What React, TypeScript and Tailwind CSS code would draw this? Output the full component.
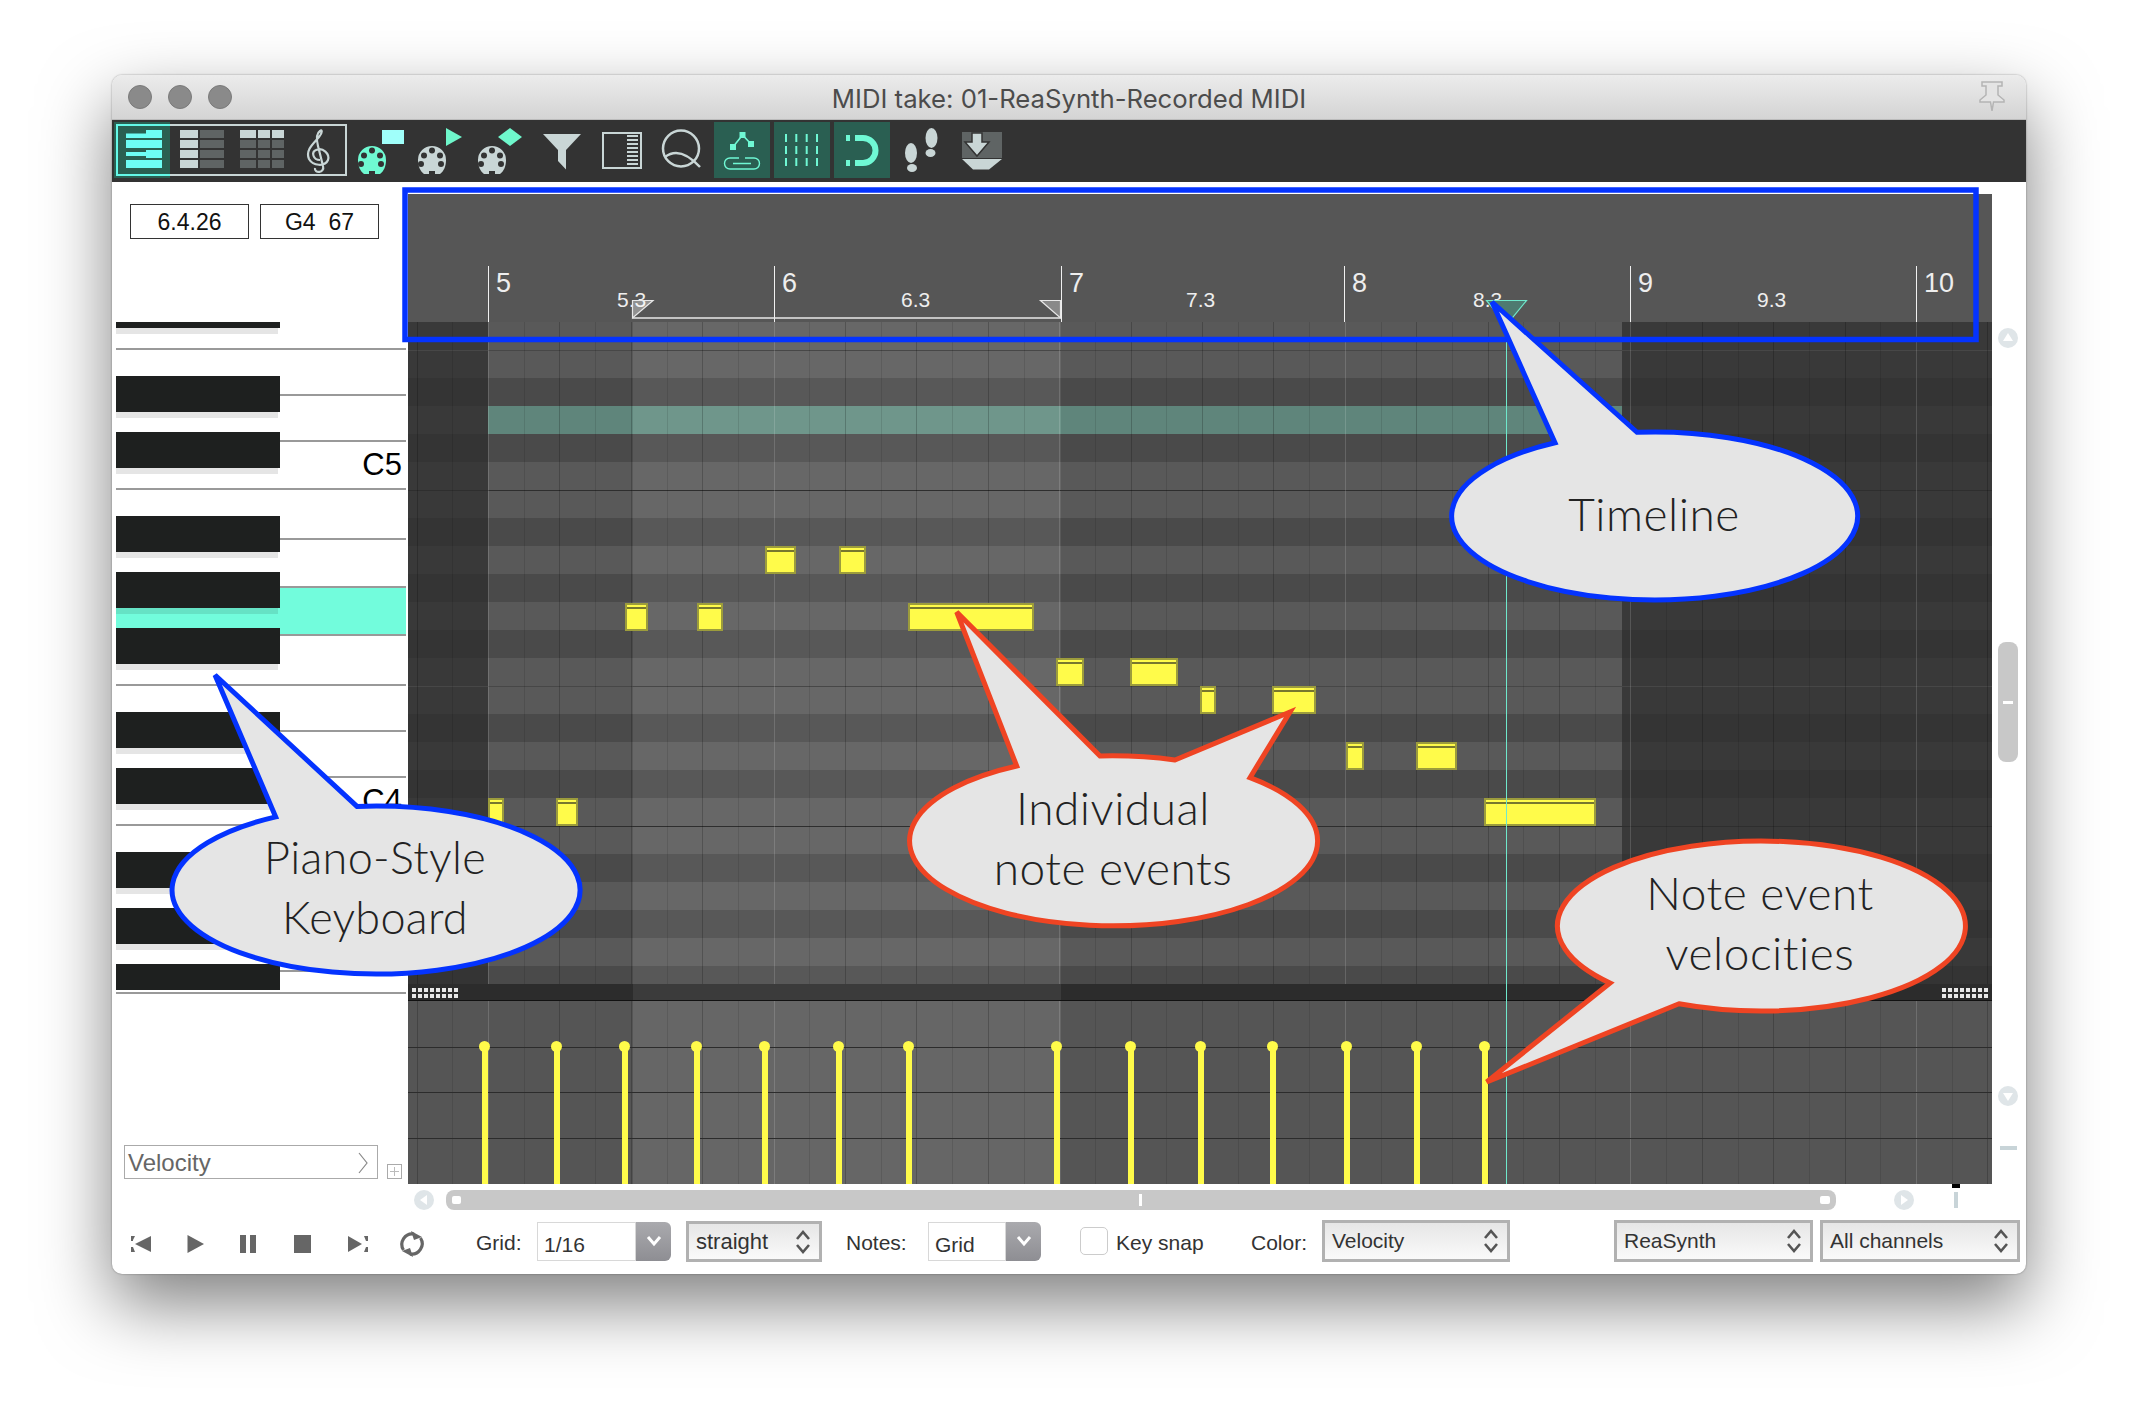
import React from "react";

const LIGHT = "#c9d6d6";
const TEAL = "#6ff8d4";
const DIM = "#5f6464";

const rowPattern = "LLDTDLLDLDLDLLDLDLLDLDLD".split("");
const rowLines: Record<number, string> = {
  1: "border-t border-[#474747]",
  6: "border-t border-[#2e2e2e]",
  13: "border-t border-[#474747]",
  18: "border-t border-[#2e2e2e]",
};
const segClasses: Record<string, string[]> = {
  L: ["bg-[#393939]", "bg-[#595959]", "bg-[#676767]", "bg-[#595959]", "bg-[#393939]"],
  D: ["bg-[#343434]", "bg-[#4a4a4a]", "bg-[#585858]", "bg-[#4a4a4a]", "bg-[#343434]"],
  T: ["bg-[#393939]", "bg-[#5f857b]", "bg-[#6f968b]", "bg-[#5f857b]", "bg-[#393939]"],
};
const segWidths = ["w-[80px]", "w-[145px]", "w-[428px]", "w-[561px]", "flex-1"];

const notes = [
  [765, 546, 31], [839, 546, 27],
  [625, 603, 23], [697, 603, 26], [908, 603, 126],
  [1056, 658, 28], [1130, 658, 48],
  [1200, 686, 16], [1272, 686, 44],
  [1346, 742, 18], [1416, 742, 41],
  [488, 798, 16], [556, 798, 22], [1484, 798, 112],
];
const stems = [485, 557, 625, 697, 765, 839, 909, 1057, 1131, 1201, 1273, 1347, 1417, 1485];
const bars = [
  { x: 80, t: "5" }, { x: 366, t: "6" }, { x: 653, t: "7" },
  { x: 936, t: "8" }, { x: 1222, t: "9" }, { x: 1508, t: "10" },
];
const subs = [
  { x: 209, t: "5.3" }, { x: 493, t: "6.3" }, { x: 778, t: "7.3" },
  { x: 1065, t: "8.3" }, { x: 1349, t: "9.3" },
];
const whiteEnds = [350, 396, 442, 490, 540, 588, 636, 686, 732, 778, 826, 874, 922, 972, 994];
const blackKeys = [
  [322, 6], [376, 36], [432, 36], [516, 36], [572, 36], [628, 36],
  [712, 36], [768, 36], [852, 36], [908, 36], [964, 26],
];

function GridLines() {
  const items = [];
  for (let i = -2; i < 43; i++) {
    const x = Math.round(80 + 35.7 * i);
    const bar = i % 8 === 0;
    items.push(
      <div
        key={i}
        className={bar ? "absolute top-0 bottom-0 w-px bg-white/15" : i % 2 === 0 ? "absolute top-0 bottom-0 w-px bg-black/20" : "absolute top-0 bottom-0 w-px bg-black/10"}
        style={{ left: x }}
      />
    );
  }
  return <>{items}</>;
}

function Handle({ className }: { className: string }) {
  return (
    <div className={"absolute top-[4px] grid grid-cols-8 gap-[2px] w-[46px] " + className}>
      {Array.from({ length: 16 }).map((_, i) => (
        <div key={i} className="w-[4px] h-[4px] bg-[#e8e8e8]" />
      ))}
    </div>
  );
}

function Din({ cx, fill }: { cx: number; fill: string }) {
  return (
    <g>
      <path
        fill={fill}
        d={`M${cx - 14},160 A14,14 0 0 1 ${cx + 14},160 C${cx + 14},166 ${cx + 12},171 ${cx + 8},174 H${cx + 3} V171 H${cx - 3} V174 H${cx - 8} C${cx - 12},171 ${cx - 14},166 ${cx - 14},160 Z`}
      />
      {[[0, 150.5], [-8, 155.5], [8, 155.5], [-11, 164], [9, 164]].map(([dx, y], i) => (
        <circle key={i} cx={cx + dx} cy={y} r={3} fill="#333333" />
      ))}
    </g>
  );
}

function Bar({ x, w, children }: { x: number; w: number; children: React.ReactNode }) {
  return (
    <svg width={w} height={62} viewBox={`${x} 120 ${w} 62`} className="shrink-0 block">
      {children}
    </svg>
  );
}

function Toolbar() {
  const rowsY = [130, 140, 150, 160];
  return (
    <div className="h-[62px] bg-[#333333] flex shrink-0">
      <Bar x={112} w={240}>
        <rect x={114} y={122} width={56} height={56} fill="#2a5f52" />
        <rect x={117} y={125} width={229} height={50} fill="none" stroke={LIGHT} strokeWidth={2} />
        <path d="M170,125 H117 V175 H170" fill="none" stroke="#64f8e8" strokeWidth={2} />
        <g fill="#6dfdf5">
          <rect x={146} y={130} width={16} height={8} />
          <rect x={126} y={133.5} width={20} height={4.5} />
          <rect x={126} y={140} width={36} height={8} />
          <rect x={146} y={150} width={16} height={8} />
          <rect x={126} y={152} width={20} height={4} />
          <rect x={126} y={160} width={36} height={8} />
        </g>
        {rowsY.map((y) => (
          <g key={y}>
            <rect x={180} y={y} width={18} height={8} fill={LIGHT} />
            <rect x={200} y={y} width={24} height={8} fill={DIM} />
            <rect x={240} y={y} width={16} height={8} fill={y === 130 ? LIGHT : DIM} />
            <rect x={258} y={y} width={12} height={8} fill={y === 130 ? LIGHT : DIM} />
            <rect x={272} y={y} width={12} height={8} fill={y === 130 ? LIGHT : DIM} />
          </g>
        ))}
        <path
          d="M320,160 C313,160 311,152 316,150 C323,147 330,154 328,160 C325,167 313,166 309,159 C305,150 314,143 319,137 C323,132 322,129 320,131 C317,133 316,138 318,146 L323,166 C325,173 314,174 315,168"
          fill="none"
          stroke={LIGHT}
          strokeWidth={2.2}
        />
      </Bar>
      <Bar x={352} w={180}>
        <Din cx={372} fill="#6ffad2" />
        <rect x={382} y={130} width={22} height={14} fill="#a0fffa" />
        <Din cx={432} fill={LIGHT} />
        <path d="M446,128 L462,137 L446,146 Z" fill="#6ff8cc" />
        <Din cx={492} fill={LIGHT} />
        <path d="M510,128 L522,137 L510,146 L498,137 Z" fill="#6ff8cc" />
      </Bar>
      <Bar x={532} w={180}>
        <path d="M543,134 H581 L566,150 V169.5 L558,161 V150 Z" fill={LIGHT} />
        <rect x={603} y={133} width={38} height={35} fill="none" stroke={LIGHT} strokeWidth={2} />
        {[136, 140, 144, 148, 152, 156, 160, 164].map((y) => (
          <rect key={y} x={627} y={y - 1} width={11} height={2} fill={LIGHT} />
        ))}
        <circle cx={681} cy={148.5} r={18} fill="none" stroke={LIGHT} strokeWidth={2.5} />
        <path d="M665,157 C674,150 686,152 700,167" fill="none" stroke={LIGHT} strokeWidth={2.5} />
      </Bar>
      <Bar x={712} w={180}>
        <rect x={714} y={122} width={56} height={56} fill="#2a5f52" />
        <rect x={774} y={122} width={56} height={56} fill="#2a5f52" />
        <rect x={834} y={122} width={56} height={56} fill="#2a5f52" />
        <g fill={TEAL}>
          <rect x={739.5} y={132} width={6} height={6} />
          <rect x={730} y={144} width={6} height={6} />
          <rect x={748} y={141} width={6} height={6} />
        </g>
        <path d="M733,147 L742.5,135 L751,144" fill="none" stroke={TEAL} strokeWidth={1.6} />
        <path d="M739,158 H730 a5.5,5.5 0 0 0 0,11 H754 a5.5,5.5 0 0 0 0,-11 H745 M733,163.5 H751" fill="none" stroke={TEAL} strokeWidth={1.4} />
        {[786, 796.3, 806.7, 817].map((x) => (
          <path key={x} d={`M${x},134 V142 M${x},146 V154 M${x},158 V166`} stroke={TEAL} strokeWidth={2} fill="none" />
        ))}
        <path d="M855,138 H863 A12.5,12.5 0 0 1 863,163 H855" fill="none" stroke={TEAL} strokeWidth={6} />
        <rect x={846} y={135} width={4} height={6} fill={TEAL} />
        <rect x={846} y={160} width={4} height={6} fill={TEAL} />
      </Bar>
      <Bar x={892} w={120}>
        <g fill={LIGHT}>
          <ellipse cx={911} cy={153} rx={6} ry={10} />
          <ellipse cx={912} cy={168} rx={5} ry={4} />
          <ellipse cx={931.5} cy={138} rx={6} ry={10} />
          <ellipse cx={930.5} cy={153} rx={5} ry={4} />
        </g>
        <path d="M962,132 H1002 V158 H962 Z" fill={DIM} />
        <path d="M962,159 H1002 L989,169.5 H973 Z" fill={LIGHT} />
        <path d="M972,133 H982 V142 H989 L977,156 L965,142 H972 Z" fill={LIGHT} stroke="#333333" strokeWidth={1.5} />
      </Bar>
    </div>
  );
}

function Updown() {
  return (
    <svg width={14} height={24} viewBox="0 0 14 24" className="shrink-0">
      <path d="M1,9 L7,2 L13,9 M1,15 L7,22 L13,15" fill="none" stroke="#555555" strokeWidth={2.6} />
    </svg>
  );
}

function Stepper({ label, className }: { label: string; className: string }) {
  return (
    <div className={"border-[3px] border-[#b1b1b1] bg-gradient-to-b from-[#e6e6e6] to-[#fafafa] flex items-center justify-between pl-[7px] pr-[9px] text-[#333333] shrink-0 " + className}>
      <span>{label}</span>
      <Updown />
    </div>
  );
}

function Combo({ label, className }: { label: string; className: string }) {
  return (
    <div className={"h-[39px] flex shrink-0 " + className}>
      <div className="flex-1 bg-white border border-[#d8d8d8] pl-[6px] pt-[9px] leading-[26px] text-[#333333]">{label}</div>
      <div className="w-[35px] bg-gradient-to-b from-[#aaaaae] to-[#8e8e93] rounded-r-[6px] flex items-center justify-center">
        <svg width={16} height={12} viewBox="0 0 16 12">
          <path d="M2,2 L8,9 L14,2" fill="none" stroke="#ffffff" strokeWidth={3} />
        </svg>
      </div>
    </div>
  );
}

function Circle({ dir }: { dir: "up" | "down" | "left" | "right" }) {
  const p = {
    up: "M10,5 L15,13 H5 Z",
    down: "M10,15 L15,7 H5 Z",
    left: "M6,10 L13,5 V15 Z",
    right: "M14,10 L7,5 V15 Z",
  }[dir];
  return (
    <svg width={20} height={20} viewBox="0 0 20 20" className="shrink-0 block">
      <circle cx={10} cy={10} r={10} fill="#dfe5e8" />
      <path d={p} fill="#ffffff" />
    </svg>
  );
}

function Keyboard() {
  let prev = 322;
  return (
    <div className="relative w-[290px] h-[672px] ml-[4px] mt-[83px]">
      {whiteEnds.map((end) => {
        const h = end - prev;
        const isG = end === 636;
        prev = end;
        return (
          <div
            key={end}
            className={"relative border-b-2 border-[#999999] " + (isG ? "bg-[#72fcdc]" : "bg-white")}
            style={{ height: h }}
          >
            {end === 490 && <span className="absolute right-[4px] bottom-[5px] text-[31px] leading-[36px] text-black">C5</span>}
            {end === 826 && <span className="absolute right-[4px] bottom-[5px] text-[31px] leading-[36px] text-black">C4</span>}
          </div>
        );
      })}
      {blackKeys.map(([y, h]) => (
        <div key={y} className="absolute left-0" style={{ top: y - 322 }}>
          <div className="w-[164px] bg-[#1e201f]" style={{ height: h }} />
          {y !== 964 && <div className="w-[162px] h-[6px] bg-black/10" />}
        </div>
      ))}
    </div>
  );
}

function Ruler() {
  return (
    <div className="relative h-[128px] bg-[#565656] text-[#eeeeee]">
      {bars.map((b) => (
        <React.Fragment key={b.t}>
          <div className="absolute top-[72px] bottom-0 w-px bg-[#f0f0f0]" style={{ left: b.x }} />
          <span className="absolute top-[76px] text-[27px] leading-[27px]" style={{ left: b.x + 8 }}>{b.t}</span>
        </React.Fragment>
      ))}
      {subs.map((s) => (
        <span key={s.t} className="absolute top-[95px] text-[21px] leading-[21px]" style={{ left: s.x }}>{s.t}</span>
      ))}
      <svg className="absolute inset-0" width={1584} height={128} viewBox="408 194 1584 128">
        <path d="M632.5,300.5 H653 L632.5,318 Z" fill="#ffffff" fillOpacity={0.35} stroke="#e8e8e8" strokeWidth={1.2} />
        <path d="M1060.5,300.5 H1040.5 L1060.5,318 Z" fill="#ffffff" fillOpacity={0.3} stroke="#e8e8e8" strokeWidth={1.2} />
        <path d="M632.5,318 H1060.5" stroke="#e8e8e8" strokeWidth={1.5} />
        <path d="M1486.5,300.5 H1526.5 L1506.5,325 Z" fill="#4e7a70" stroke="#6fe8cc" strokeWidth={1.2} />
      </svg>
    </div>
  );
}

function PianoRoll() {
  return (
    <div className="relative h-[662px] flex flex-col overflow-hidden">
      {rowPattern.map((t, i) => (
        <div key={i} className={"flex shrink-0 " + (i === 23 ? "h-[18px] " : "h-[28px] ") + (rowLines[i] || "")}>
          {segWidths.map((w, j) => (
            <div key={j} className={w + " " + segClasses[t][j]} />
          ))}
        </div>
      ))}
      <GridLines />
      {notes.map(([x, y, w], i) => (
        <div
          key={i}
          className="absolute h-[28px] border-2 border-[#9c9c3c] bg-[#fffb4a]"
          style={{ left: x - 408, top: y - 322, width: w }}
        >
          <div className="h-[2px] mt-[2px] bg-[#77772e]" />
        </div>
      ))}
    </div>
  );
}

function Lane() {
  return (
    <>
      <div className="relative flex h-[17px] border-b border-[#111111]">
        <div className="w-[225px] bg-[#2c2c2c]" />
        <div className="w-[428px] bg-[#3b3b3b]" />
        <div className="flex-1 bg-[#2c2c2c]" />
        <Handle className="left-[4px]" />
        <Handle className="right-[4px]" />
      </div>
      <div className="relative h-[183px] flex overflow-hidden">
        <div className="w-[225px] bg-[#555555]" />
        <div className="w-[428px] bg-[#666666]" />
        <div className="flex-1 bg-[#555555]" />
        <GridLines />
        <div className="absolute left-0 right-0 top-[46px] h-px bg-[#2c2c2c]" />
        <div className="absolute left-0 right-0 top-[91px] h-px bg-[#2c2c2c]" />
        <div className="absolute left-0 right-0 top-[137px] h-px bg-[#2c2c2c]" />
        {stems.map((x) => (
          <React.Fragment key={x}>
            <div className="absolute top-[46px] bottom-0 w-[6px] bg-[#fffb4a]" style={{ left: x - 411 }} />
            <div className="absolute top-[40px] w-[11px] h-[11px] rounded-full bg-[#fffb4a]" style={{ left: x - 414 }} />
          </React.Fragment>
        ))}
      </div>
    </>
  );
}

function HScroll() {
  return (
    <div className="flex items-center mt-[6px] h-[20px] pl-[6px]">
      <Circle dir="left" />
      <div className="relative w-[1390px] h-[20px] ml-[12px] rounded-[8px] bg-[#c8c8c8] shrink-0">
        <div className="absolute left-[6px] top-[6px] w-[9px] h-[8px] rounded-[2px] bg-white" />
        <div className="absolute left-[693px] top-[4px] w-[3px] h-[12px] bg-white" />
        <div className="absolute right-[6px] top-[6px] w-[10px] h-[8px] rounded-[2px] bg-white" />
      </div>
      <div className="ml-[58px]"><Circle dir="right" /></div>
      <div className="relative ml-[40px] w-[4px] h-[16px] bg-[#c8d4d8]">
        <div className="absolute -top-[8px] -left-[2px] w-[8px] h-[4px] bg-black" />
      </div>
    </div>
  );
}

function VScroll() {
  return (
    <div className="w-[34px] shrink-0 flex flex-col">
      <div className="ml-[6px] mt-[146px]"><Circle dir="up" /></div>
      <div className="ml-[6px] mt-[294px] w-[20px] h-[120px] rounded-[8px] bg-[#c8c8c8] flex items-center justify-center">
        <div className="w-[10px] h-[3px] bg-white" />
      </div>
      <div className="ml-[6px] mt-[324px]"><Circle dir="down" /></div>
      <div className="ml-[8px] mt-[40px] w-[17px] h-[4px] bg-[#c8d4d8]" />
    </div>
  );
}

function Transport() {
  return (
    <svg width={328} height={50} viewBox="112 1216 328 50" className="shrink-0 block">
      <g fill="#666666">
        <path d="M151,1236 L135,1244 L151,1252 Z" />
        <path d="M131,1236 H135 L133,1240 V1241 H131 Z M131,1247 H133 L135,1252 H131 Z" />
        <path d="M187.5,1235 L204,1244 L187.5,1253 Z" />
        <rect x={240} y={1235} width={6} height={18} />
        <rect x={250} y={1235} width={6} height={18} />
        <rect x={294} y={1235} width={17} height={18} />
        <path d="M348,1236 L362,1244 L348,1252 Z" />
        <path d="M364,1236 H368 V1241 H366 Z M366,1247 H368 V1252 H364 Z" />
      </g>
      <path d="M403.5,1250 A10.5,10.5 0 0 1 414,1234 M420.5,1238 A10.5,10.5 0 0 1 410,1254" fill="none" stroke="#666666" strokeWidth={3.2} />
      <path d="M411,1231 L422,1237 L414,1240 Z M413,1257 L402,1251 L410,1248 Z" fill="#666666" />
    </svg>
  );
}

function BottomBar() {
  return (
    <div className="h-[50px] flex items-center text-[21px] text-[#333333] shrink-0">
      <Transport />
      <span className="ml-[36px] w-[46px] shrink-0 pt-[3px] whitespace-nowrap">Grid:</span>
      <Combo label="1/16" className="ml-[15px] w-[134px]" />
      <Stepper label="straight" className="ml-[15px] w-[136px] h-[41px] text-[22px] pt-[1px]" />
      <span className="ml-[24px] w-[64px] shrink-0 pt-[3px] whitespace-nowrap">Notes:</span>
      <Combo label="Grid" className="ml-[18px] w-[113px]" />
      <div className="ml-[39px] w-[28px] h-[28px] rounded-[5px] border border-[#cccccc] bg-white shrink-0" />
      <span className="ml-[8px] w-[86px] shrink-0 pt-[3px] whitespace-nowrap">Key snap</span>
      <span className="ml-[49px] w-[56px] shrink-0 pt-[3px] whitespace-nowrap">Color:</span>
      <Stepper label="Velocity" className="ml-[15px] w-[188px] h-[42px]" />
      <Stepper label="ReaSynth" className="ml-[104px] w-[199px] h-[42px]" />
      <Stepper label="All channels" className="ml-[7px] w-[200px] h-[42px]" />
    </div>
  );
}

function Callouts() {
  return (
    <>
      <svg className="absolute inset-0 pointer-events-none" width={2138} height={1422} viewBox="0 0 2138 1422">
        <rect x={405} y={190} width={1571} height={149.5} fill="none" stroke="#0433ff" strokeWidth={5.5} />
        <g fill="#e5e5e5" strokeWidth={5} strokeLinejoin="miter">
          <path stroke="#0433ff" d="M1492,302 L1555,442.8 A203,84 0 1 0 1637,432.3 Z" />
          <path stroke="#0433ff" d="M215,675 L275.7,816.9 A204,84 0 1 0 357,806.4 Z" />
          <path stroke="#ef4423" d="M956.7,612 L1016.7,766 A204,85 0 1 0 1250,777.6 L1290,712 L1175,760 A204,85 0 0 0 1100,756 Z" />
          <path stroke="#ef4423" d="M1486.7,1082 L1610,983 A204,85 0 1 1 1679,1003.8 Z" />
        </g>
      </svg>
      <div className="absolute left-[1454px] top-[484px] w-[400px] text-center font-['Lato'] font-light text-[46px] tracking-[0.5px] leading-[60px] text-[#222222]">Timeline</div>
      <div className="absolute left-[175px] top-[827px] w-[400px] text-center font-['Lato'] font-light text-[45px] tracking-[0.3px] leading-[60px] text-[#222222]">Piano-Style<br />Keyboard</div>
      <div className="absolute left-[913px] top-[778px] w-[400px] text-center font-['Lato'] font-light text-[46px] tracking-[0.5px] leading-[60px] text-[#222222]">Individual<br />note events</div>
      <div className="absolute left-[1560px] top-[863px] w-[400px] text-center font-['Lato'] font-light text-[46px] tracking-[0.5px] leading-[60px] text-[#222222]">Note event<br />velocities</div>
    </>
  );
}

export default function App() {
  return (
    <div className="relative w-[2138px] h-[1422px] overflow-hidden bg-white pt-[75px] pl-[112px] font-['Liberation_Sans',sans-serif]">
      <div className="w-[1914px] h-[1199px] rounded-[10px] overflow-hidden bg-white flex flex-col shadow-[0_30px_70px_rgba(0,0,0,0.5),0_0_2px_rgba(0,0,0,0.4)]">
        <div className="relative h-[45px] shrink-0 bg-gradient-to-b from-[#ececec] to-[#d4d4d4] flex items-center pl-[16px] gap-[16px] border-b border-[#bbbbbb]">
          <div className="w-[24px] h-[24px] rounded-full bg-[#8a8a8a] border border-[#7a7a7a]" />
          <div className="w-[24px] h-[24px] rounded-full bg-[#8a8a8a] border border-[#7a7a7a]" />
          <div className="w-[24px] h-[24px] rounded-full bg-[#8a8a8a] border border-[#7a7a7a]" />
          <div className="absolute inset-0 pt-[5px] flex items-center justify-center font-['Inter'] text-[25.7px] text-[#4c4c4c] whitespace-nowrap">MIDI take: 01-ReaSynth-Recorded MIDI</div>
          <svg width={28} height={32} viewBox="0 0 28 32" className="absolute right-[20px] top-[5px]">
            <path d="M4,2 H24 V6 H20 V15 L26,20 V22 H15.5 L14,31 L12.5,22 H2 V20 L8,15 V6 H4 Z" fill="#e4e4e4" stroke="#b4b4b4" strokeWidth={1.5} />
          </svg>
        </div>
        <Toolbar />
        <div className="h-[1034px] flex shrink-0">
          <div className="w-[296px] shrink-0">
            <div className="flex pl-[18px] pt-[22px] gap-[11px]">
              <div className="w-[119px] h-[35px] border border-[#333333] pt-[1px] flex items-center justify-center text-[23px] text-[#111111]">6.4.26</div>
              <div className="w-[119px] h-[35px] border border-[#333333] pt-[1px] flex items-center justify-center text-[23px] text-[#111111] whitespace-pre">G4  67</div>
            </div>
            <Keyboard />
            <div className="flex items-end mt-[151px] ml-[12px]">
              <div className="w-[254px] h-[34px] border-[1.5px] border-[#aaaaaa] pt-[1px] flex items-center justify-between pl-[3px] pr-[8px] text-[24px] text-[#666666]">
                <span>Velocity</span>
                <svg width={12} height={22} viewBox="0 0 12 22"><path d="M2,1 L10,11 L2,21" fill="none" stroke="#888888" strokeWidth={1.2} /></svg>
              </div>
              <div className="ml-[9px] w-[15px] h-[15px] border border-[#aaaaaa] flex items-center justify-center">
                <svg width={9} height={9} viewBox="0 0 9 9"><path d="M4.5,0 V9 M0,4.5 H9" stroke="#bbbbbb" strokeWidth={1} /></svg>
              </div>
            </div>
          </div>
          <div className="relative w-[1584px] shrink-0 pt-[12px]">
            <Ruler />
            <PianoRoll />
            <Lane />
            <HScroll />
            <div className="absolute left-[1098px] top-[140px] w-px h-[862px] bg-[#6fe8cc]" />
          </div>
          <VScroll />
        </div>
        <BottomBar />
      </div>
      <Callouts />
    </div>
  );
}
